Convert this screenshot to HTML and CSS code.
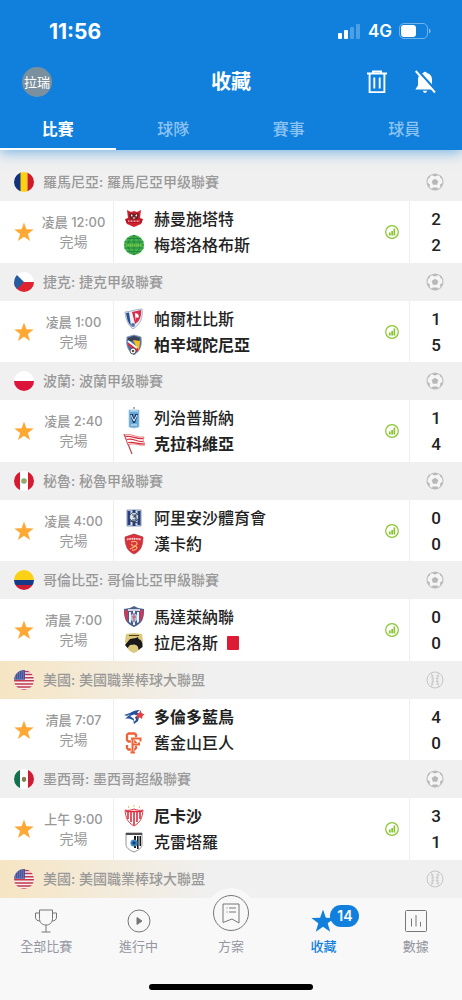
FILE: index.html
```
<!DOCTYPE html>
<html lang="zh-Hant">
<head>
    <meta charset="UTF-8">
    <meta name="viewport" content="width=device-width, initial-scale=1.0">
    <title>收藏</title>
    <link rel="stylesheet" href="styles.css">
</head>
<body>
    <!-- shared icons -->
    <svg class="sprite" aria-hidden="true">
        <symbol id="star" viewBox="0 0 20 20">
            <path d="M10 .4l2.400 6.900 7.300.1-5.800 4.500 2.100 7L10 14.700 4 18.900l2.100-7L.3 7.400l7.300-.1z"/>
        </symbol>
        <symbol id="soccer" viewBox="0 0 18 18">
            <circle cx="9" cy="9" r="8" fill="#f5f5f5" stroke="#c3c3c3" stroke-width="1.200"/>
            <path d="M9 5.700l3.300 2.300-1.200 3.800H6.900L5.700 8z" fill="#b8b8b8"/>
            <path d="M5.300 2L9 3.400 12.700 2 9 .8zM1.200 6.200L3.800 4.500l.4-2.500L2 4zM16.800 6.200l-2.600-1.700-.4-2.500L16 4zM1.100 9.400l2.800 2-.2 3-1.800-2zM16.900 9.400l-2.800 2 .2 3 1.800-2zM6.600 14.500h4.800l.8 1.900L9 17.300l-3.200-.9z" fill="#b8b8b8"/>
        </symbol>
        <symbol id="baseball" viewBox="0 0 18 18">
            <circle cx="9" cy="9" r="8" fill="none" stroke="#c6c6c6" stroke-width="1"/>
            <path d="M5 2.200c2.600 4 2.600 9.600 0 13.600M13 2.200c-2.600 4-2.600 9.600 0 13.600" fill="none" stroke="#c6c6c6" stroke-width="1"/>
            <path d="M4.500 5.500l3.200-.9M5 7.800l3.200-.4M5 10.200l3.200.4M4.500 12.500l3.200.9M13.500 5.500l-3.200-.9M13 7.800l-3.200-.4M13 10.200l-3.200.4M13.500 12.500l-3.200.9" stroke="#c6c6c6" stroke-width=".8"/>
        </symbol>
        <symbol id="stats" viewBox="0 0 14 14">
            <circle cx="7" cy="7" r="6.300" fill="none" stroke="#86c72d" stroke-width="1.200"/>
            <path d="M4 7.600h1.700v2.800H4zM6.300 6H8v4.400H6.300zM8.500 3.500h1.700v6.900H8.500z" fill="#86c72d"/>
        </symbol>
        <symbol id="flag-us" viewBox="0 0 20 20">
            <path d="M0 0h20v20H0z" fill="#f4edf0"/>
            <path d="M0 1.500h20M0 4.600h20M0 7.700h20M0 10.800h20M0 13.900h20M0 17h20M0 20h20" stroke="#c3364b" stroke-width="1.500"/>
            <path d="M0 0h11v9.800H0z" fill="#46529b"/>
            <path d="M1 2h10M1 4h10M1 6h10M1 8h10" stroke="#b9bfe0" stroke-width=".7" stroke-dasharray=".8 1.200"/>
        </symbol>
    </svg>

    <header class="top">
        <div class="status-bar">
            <span class="clock">11:56</span>
            <span class="status-icons">
                <svg width="23" height="15" viewBox="0 0 23 15" fill="#fff">
                    <rect x="0" y="9" width="4" height="6" rx="1"/>
                    <rect x="6" y="6" width="4" height="9" rx="1"/>
                    <rect x="12" y="3" width="4" height="12" rx="1" opacity=".25"/>
                    <rect x="18" y="0" width="4" height="15" rx="1" opacity=".25"/>
                </svg>
                <span class="network">4G</span>
                <svg width="32" height="16" viewBox="0 0 32 16">
                    <rect x=".5" y=".5" width="28" height="15" rx="4.500" fill="none" stroke="#fff" stroke-opacity=".4"/>
                    <rect x="2" y="2" width="15" height="12" rx="3" fill="#fff"/>
                    <path d="M30 5.500c2 .8 2 4.200 0 5z" fill="#fff" opacity=".5"/>
                </svg>
            </span>
        </div>
        <div class="title-bar">
            <button class="avatar">拉瑞</button>
            <h1>收藏</h1>
            <div class="actions">
                <button aria-label="刪除">
                    <svg width="22" height="24" viewBox="0 0 22 24" fill="none" stroke="#fff" stroke-width="1.900">
                        <path d="M1 3.500h20M7 3.200V1.400h8v1.800M3.600 3.500v18.600h14.800V3.500M8.300 7.500v11M13.700 7.500v11"/>
                    </svg>
                </button>
                <button aria-label="關閉通知">
                    <svg width="22" height="24" viewBox="0 0 22 24">
                        <path d="M4 9.500c0-3.300 2-5.800 5.200-6.400a1.900 1.900 0 0 1 3.600 0c3.200.6 5.200 3.100 5.200 6.400v5.700l2.600 4.300H1.400L4 15.200zM9 20.700h4c0 2.800-4 2.800-4 0z" fill="#fff"/>
                        <path d="M3.500.2L23 21.700" stroke="#1180dc" stroke-width="2.400"/>
                        <path d="M1.700 1L21 22.500" stroke="#fff" stroke-width="1.900"/>
                    </svg>
                </button>
            </div>
        </div>
        <nav class="tabs">
            <a href="#" class="active">比賽</a>
            <a href="#">球隊</a>
            <a href="#">賽事</a>
            <a href="#">球員</a>
        </nav>
    </header>

    <main class="matches">
        <section class="group">
            <h2 class="league">
                <svg class="flag" viewBox="0 0 20 20"><path d="M0 0h7v20H0z" fill="#12327c"/><path d="M6.500 0h7v20h-7z" fill="#fcd20e"/><path d="M13.500 0H20v20h-6.500z" fill="#ce1b2c"/></svg>
                <span>羅馬尼亞: 羅馬尼亞甲级聯賽</span>
                <svg class="sport"><use href="#soccer"/></svg>
            </h2>
            <div class="match">
                <button class="fav" aria-label="收藏"><svg><use href="#star"/></svg></button>
                <div class="time"><span class="hour">凌晨 12:00</span><span>完場</span></div>
                <div class="teams">
                    <div class="team">
                        <svg class="crest" viewBox="0 0 22 22"><path d="M4 2l4 2 3-1 3 1 4-2-1 8 3 1-2 5-7 3-7-3-2-5 3-1z" fill="#d0202e"/><path d="M6 6l2-1 3 1 3-1 2 1-1 5-4 1-4-1z" fill="#6d2027"/><path d="M8 6l2 2-2 .5zM14 6l-2 2 2 .5zM9.500 9.500h3L11 11z" fill="#fff"/><path d="M2.500 11.500h17l-1 3.500h-15z" fill="#b61424"/><path d="M5 13.200h12" stroke="#f3c9cb" stroke-width="1.200" stroke-dasharray="1 .5"/></svg>
                        <span>赫曼施塔特</span>
                    </div>
                    <div class="team">
                        <svg class="crest" viewBox="0 0 22 22"><circle cx="11" cy="11" r="10" fill="#3fb64c"/><path d="M1 8h20M1 14h20M4 4.500h14M4 17.500h14M11 1v20M11 1C3 7 3 15 11 21M11 1c8 6 8 14 0 20M1 11h20" fill="none" stroke="#23743b" stroke-width=".7"/><path d="M3 11.200h16" stroke="#7fcb45" stroke-width="2" stroke-dasharray="1.500 .5"/></svg>
                        <span>梅塔洛格布斯</span>
                    </div>
                </div>
                <button class="stats" aria-label="數據"><svg><use href="#stats"/></svg></button>
                <div class="score"><span>2</span><span>2</span></div>
            </div>
        </section>

        <section class="group">
            <h2 class="league">
                <svg class="flag" viewBox="0 0 20 20"><path d="M0 0h20v10H0z" fill="#fff"/><path d="M0 10h20v10H0z" fill="#df2430"/><path d="M0 0l10 10L0 20z" fill="#245d9f"/></svg>
                <span>捷克: 捷克甲级聯賽</span>
                <svg class="sport"><use href="#soccer"/></svg>
            </h2>
            <div class="match">
                <button class="fav" aria-label="收藏"><svg><use href="#star"/></svg></button>
                <div class="time"><span class="hour">凌晨 1:00</span><span>完場</span></div>
                <div class="teams">
                    <div class="team">
                        <svg class="crest" viewBox="0 0 22 22"><path d="M2 4c5 0 11-3 17-3 1 8-1 15-9 20C5 17 3 12 2 4z" fill="#eef1f7" stroke="#8190b6" stroke-width=".7"/><path d="M3 5l3-.5L8 18C5 15 4 11 3 5z" fill="#284f96"/><path d="M9 4l9-2c.5 6-1 11-6 14z" fill="#d92d4b"/><path d="M12 5l3 1 1 3-2 1-1-1v4l-1-6z" fill="#fff"/><circle cx="10" cy="17" r="2" fill="#5b74a8"/></svg>
                        <span>帕爾杜比斯</span>
                    </div>
                    <div class="team winner">
                        <svg class="crest" viewBox="0 0 22 22"><path d="M4 3l7-2 7 2c1 8 0 13-7 18C4 16 3 11 4 3z" fill="#4a6db0" stroke="#8c94a8" stroke-width=".8"/><path d="M5 4l6-2 6 2-1 3H5z" fill="#3a4258"/><path d="M5 9l12 5-3 4-9-7z" fill="#e42b39"/><path d="M10 6l7 1-1 9-3-4z" fill="#f5c21b"/><path d="M5 7l9 7" stroke="#fff" stroke-width="1.800"/><circle cx="10" cy="17" r="3" fill="#eee" stroke="#333" stroke-width=".7"/><circle cx="10" cy="17" r="1" fill="#222"/></svg>
                        <span>柏辛域陀尼亞</span>
                    </div>
                </div>
                <button class="stats" aria-label="數據"><svg><use href="#stats"/></svg></button>
                <div class="score"><span>1</span><span>5</span></div>
            </div>
        </section>

        <section class="group">
            <h2 class="league">
                <svg class="flag" viewBox="0 0 20 20"><path d="M0 0h20v10H0z" fill="#fff"/><path d="M0 10h20v10H0z" fill="#dc143c"/></svg>
                <span>波蘭: 波蘭甲级聯賽</span>
                <svg class="sport"><use href="#soccer"/></svg>
            </h2>
            <div class="match">
                <button class="fav" aria-label="收藏"><svg><use href="#star"/></svg></button>
                <div class="time"><span class="hour">凌晨 2:40</span><span>完場</span></div>
                <div class="teams">
                    <div class="team">
                        <svg class="crest" viewBox="0 0 22 22"><circle cx="11" cy="1" r=".9" fill="#7b8d9f"/><path d="M6 3h10v17l-5 1-5-1z" fill="#68a9d6" stroke="#a3c8e0" stroke-width=".8"/><path d="M7 7h3l1 4 1-4h3l-3 9h-2z" fill="#173d72"/><path d="M8 8l3 6 3-6" fill="none" stroke="#fff" stroke-width="1"/><path d="M7 4h8M8 18h6" stroke="#dceef9"/></svg>
                        <span>列治普斯納</span>
                    </div>
                    <div class="team winner">
                        <svg class="crest" viewBox="0 0 22 22"><path d="M1 1l8 20" stroke="#b94851" stroke-width="1.200"/><path d="M2 2c6-2 11 3 19 2l-1 3 2 5c-7 1-11-3-17 0z" fill="#fff" stroke="#d94751" stroke-width=".7"/><path d="M3 3.500c6-1 10 3 17 2M4 6.500c6-2 10 3 16 2M5 9.800c6-2 10 2 16 1" fill="none" stroke="#d8323e" stroke-width="1.200"/></svg>
                        <span>克拉科維亞</span>
                    </div>
                </div>
                <button class="stats" aria-label="數據"><svg><use href="#stats"/></svg></button>
                <div class="score"><span>1</span><span>4</span></div>
            </div>
        </section>

        <section class="group">
            <h2 class="league">
                <svg class="flag" viewBox="0 0 20 20"><path d="M0 0h20v20H0z" fill="#fff"/><path d="M0 0h6v20H0zM14 0h6v20h-6z" fill="#d51a31"/><circle cx="10" cy="10" r="2.800" fill="#76b36d"/><path d="M9 10h3" stroke="#d99058" stroke-width="1.500"/></svg>
                <span>秘魯: 秘魯甲級聯賽</span>
                <svg class="sport"><use href="#soccer"/></svg>
            </h2>
            <div class="match">
                <button class="fav" aria-label="收藏"><svg><use href="#star"/></svg></button>
                <div class="time"><span class="hour">凌晨 4:00</span><span>完場</span></div>
                <div class="teams">
                    <div class="team">
                        <svg class="crest" viewBox="0 0 22 22"><path d="M4 3h14v16H4z" fill="#dce2ef" stroke="#6679a8" stroke-width=".8"/><path d="M4.500 4h3v14h-3zM14.500 4h3v14h-3zM9.500 3h3v16h-3z" fill="#263f7c"/><circle cx="11" cy="10" r="4.500" fill="#e4e7ee" stroke="#35486f"/><path d="M9 8h4l-2 2h2v3H9M7 14l8 2" fill="none" stroke="#36425a" stroke-width="1.200"/></svg>
                        <span>阿里安沙體育會</span>
                    </div>
                    <div class="team">
                        <svg class="crest" viewBox="0 0 22 22"><path d="M2 4l9-3 9 3c0 8-2 14-9 17C4 18 2 12 2 4z" fill="#d8313d" stroke="#a83a42" stroke-width=".7"/><path d="M4 6.500c4-1 10-1 14 0" fill="none" stroke="#ffdcdc" stroke-width="1.800" stroke-dasharray="1.200 .5"/><path d="M8 9c7-2 8 3 3 4 5 0 3 5-2 4M8 11l3 3-4 2" fill="none" stroke="#f1b76b" stroke-width="1.200"/></svg>
                        <span>漢卡約</span>
                    </div>
                </div>
                <button class="stats" aria-label="數據"><svg><use href="#stats"/></svg></button>
                <div class="score"><span>0</span><span>0</span></div>
            </div>
        </section>

        <section class="group">
            <h2 class="league">
                <svg class="flag" viewBox="0 0 20 20"><path d="M0 0h20v10H0z" fill="#fbd116"/><path d="M0 10h20v5H0z" fill="#173a86"/><path d="M0 15h20v5H0z" fill="#ce1b31"/></svg>
                <span>哥倫比亞: 哥倫比亞甲級聯賽</span>
                <svg class="sport"><use href="#soccer"/></svg>
            </h2>
            <div class="match">
                <button class="fav" aria-label="收藏"><svg><use href="#star"/></svg></button>
                <div class="time"><span class="hour">清晨 7:00</span><span>完場</span></div>
                <div class="teams">
                    <div class="team">
                        <svg class="crest" viewBox="0 0 22 22"><path d="M1 3l6-1 4-2 4 2 6 1c0 9-1 14-10 18C2 17 1 12 1 3z" fill="#4a5f8d"/><path d="M1.500 4H5v12c-3-3-4-7-3.500-12zM17 4h3.500c.5 5-.5 9-3.500 12z" fill="#c73a5c"/><path d="M6 6h2v11l-2-1zM14 6h2v10l-2 1zM10 5h2v14h-2z" fill="#eef2fa"/><path d="M5 4h12" stroke="#fff" stroke-width="1.500"/><path d="M8 9l3-2 3 2v5l-3 3-3-3z" fill="#a5cae6"/><path d="M11 7v9M9 11h4" stroke="#d84359"/></svg>
                        <span>馬達萊納聯</span>
                    </div>
                    <div class="team">
                        <svg class="crest" viewBox="0 0 22 22"><path d="M3 2l8-1 8 1 1 7c-1 6-4 10-9 12C5 19 3 15 2 9z" fill="#dcc87e"/><path d="M6 3.500h10" stroke="#493f23" stroke-width="1"/><path d="M2 13l5-6 6-1 2-1 .5 2c3 1 4.500 4 4 8l-4 3c0-3-1-5-4-5.500L7 13l-2.500 3z" fill="#19191b"/></svg>
                        <span>拉尼洛斯</span>
                        <i class="red-card"></i>
                    </div>
                </div>
                <button class="stats" aria-label="數據"><svg><use href="#stats"/></svg></button>
                <div class="score"><span>0</span><span>0</span></div>
            </div>
        </section>

        <section class="group">
            <h2 class="league featured">
                <svg class="flag"><use href="#flag-us"/></svg>
                <span>美國: 美國職業棒球大聯盟</span>
                <svg class="sport"><use href="#baseball"/></svg>
            </h2>
            <div class="match">
                <button class="fav" aria-label="收藏"><svg><use href="#star"/></svg></button>
                <div class="time"><span class="hour">清晨 7:07</span><span>完場</span></div>
                <div class="teams">
                    <div class="team winner">
                        <svg class="crest" viewBox="0 0 22 22"><path d="M1 9l6-2c3-2 6-3 10-3l-3 2.500 3 1.500-2 7-4 3-1-4-4-1.500H2l3-2z" fill="#25509b"/><path d="M7 10l4-1.500 3.500 1L12 11l1 3-2.500 2 .5-3z" fill="#fff"/><path d="M2 9.500l5-1-1 1.500z" fill="#a4b9d9"/><path d="M14 8l2-.5L17.500 4l1 3 3 1.500-2 1.500-.5 3-2-1.500-3 1z" fill="#e23e43"/></svg>
                        <span>多倫多藍鳥</span>
                    </div>
                    <div class="team">
                        <svg class="crest" viewBox="0 0 22 22" fill="none"><path d="M13 6V2.500L11.500 1.500h-6L4 3v5l1.500 1.500h6L13 11v5l-1.500 1.500h-6L4 16v-3" stroke="#ee6337" stroke-width="2.300"/><path d="M9.500 21V6.500M8 6.500h10.500M11 12.500h5" stroke="#fff" stroke-width="3.200"/><path d="M9.500 20.500V6.500M7.500 20.500h4.500M8 6.500h9.500v3M10 12.500h6v-2" stroke="#ee6337" stroke-width="2"/></svg>
                        <span>舊金山巨人</span>
                    </div>
                </div>
                <div class="score"><span>4</span><span>0</span></div>
            </div>
        </section>

        <section class="group">
            <h2 class="league">
                <svg class="flag" viewBox="0 0 20 20"><path d="M0 0h20v20H0z" fill="#fff"/><path d="M0 0h6v20H0z" fill="#12704e"/><path d="M14 0h6v20h-6z" fill="#ce1c34"/><circle cx="10" cy="10" r="2.200" fill="#91764f"/><path d="M8 11c1 2 3 2 4 0" fill="none" stroke="#59834d"/></svg>
                <span>墨西哥: 墨西哥超級聯賽</span>
                <svg class="sport"><use href="#soccer"/></svg>
            </h2>
            <div class="match">
                <button class="fav" aria-label="收藏"><svg><use href="#star"/></svg></button>
                <div class="time"><span class="hour">上午 9:00</span><span>完場</span></div>
                <div class="teams">
                    <div class="team winner">
                        <svg class="crest" viewBox="0 0 22 22"><path d="M5 2h1M10.500 1h1M16 2h1" stroke="#d9b84d" stroke-width="1.500"/><path d="M2 5c3 1 6 0 9-1 3 1 6 2 9 1-1 8-2 12-9 16C4 17 3 13 2 5z" fill="#fff" stroke="#d93645" stroke-width="1"/><path d="M3 6.500h16M5 7v7M8 7v10M11 7v13M14 7v10M17 7v7" fill="none" stroke="#df2e40" stroke-width="1.600"/></svg>
                        <span>尼卡沙</span>
                    </div>
                    <div class="team">
                        <svg class="crest" viewBox="0 0 22 22"><path d="M3 2h16v11c0 4-3 6-8 8-5-2-8-4-8-8z" fill="#fff" stroke="#777" stroke-width=".8"/><path d="M3 2h16v2H3z" fill="#4b4b52"/><path d="M11 5h2v12h-2zM14 5h1.600v13H14zM16.500 5H18v10h-1.500z" fill="#17191f"/><circle cx="11" cy="12" r="3.600" fill="#3b87c5"/><path d="M9 12l2-2 2 2-2 2z" fill="#143d70"/></svg>
                        <span>克雷塔羅</span>
                    </div>
                </div>
                <button class="stats" aria-label="數據"><svg><use href="#stats"/></svg></button>
                <div class="score"><span>3</span><span>1</span></div>
            </div>
        </section>

        <section class="group">
            <h2 class="league featured">
                <svg class="flag"><use href="#flag-us"/></svg>
                <span>美國: 美國職業棒球大聯盟</span>
                <svg class="sport"><use href="#baseball"/></svg>
            </h2>
        </section>
    </main>

    <footer class="bottom">
        <nav class="bottom-nav">
            <a href="#">
                <svg width="24" height="24" viewBox="0 0 24 24"><path d="M5.500 1h13v8.500c0 4-2.500 6.500-6.500 6.500s-6.500-2.500-6.500-6.500zM5.500 4h-4v4c0 2.500 1.500 4 4.500 4M18.500 4h4v4c0 2.500-1.500 4-4.500 4M12 16v7M7.500 23h9"/></svg>
                <span>全部比賽</span>
            </a>
            <a href="#">
                <svg width="24" height="24" viewBox="0 0 24 24"><circle cx="12" cy="12" r="11"/><path d="M10 8.500l5 3.500-5 3.500z" fill="#777"/></svg>
                <span>進行中</span>
            </a>
            <a href="#" class="plan">
                <svg width="38" height="38" viewBox="0 0 38 38"><circle cx="19" cy="19" r="17.500"/><path d="M11 10h16v19l-7-4-9 3.500zM14.500 14h1M17 14h7M14.500 18h1M17 18h7"/></svg>
                <span>方案</span>
            </a>
            <a href="#" class="active">
                <svg width="24" height="24" viewBox="0 0 20 20"><use href="#star"/></svg>
                <b class="badge">14</b>
                <span>收藏</span>
            </a>
            <a href="#">
                <svg width="24" height="24" viewBox="0 0 24 24"><rect x="1.500" y="1.500" width="21" height="21" rx="1"/><path d="M7.500 9.500v8M12 6v11.500M16.500 13v4.500"/></svg>
                <span>數據</span>
            </a>
        </nav>
        <div class="home-bar"></div>
    </footer>
</body>
</html>
```
FILE: styles.css
```
* {
    box-sizing: border-box;
}
body {
    font-family: Inter, "Noto Sans CJK TC", sans-serif;
    background-color: #f0f0f0;
    color: #222;
    margin: 0;
    height: 100vh;
    display: flex;
    flex-direction: column;
    overflow: hidden;
}
button {
    border: none;
    background: none;
    padding: 0;
    font-family: inherit;
    color: inherit;
    cursor: pointer;
}
a {
    color: inherit;
    text-decoration: none;
}
svg {
    display: block;
    flex-shrink: 0;
}
.sprite {
    position: absolute;
    width: 0;
    height: 0;
}

/* header */
.top {
    background-color: #1180dc;
    color: #fff;
    position: relative;
    z-index: 2;
    box-shadow: 0 3px 12px rgba(17, 128, 220, 0.5);
}
.status-bar {
    display: flex;
    justify-content: space-between;
    align-items: center;
    height: 60px;
    padding: 2px 31px 0 49px;
}
.clock {
    font-size: 21px;
    font-weight: 700;
}
.status-icons {
    display: flex;
    align-items: center;
    gap: 7px;
}
.network {
    font-size: 17px;
    font-weight: 600;
}
.title-bar {
    display: grid;
    grid-template-columns: 1fr auto 1fr;
    align-items: center;
    height: 44px;
    padding: 0 22px;
}
.avatar {
    width: 30px;
    height: 30px;
    border-radius: 50%;
    background-color: #7a909f;
    color: #fff;
    font-size: 13px;
    line-height: 30px;
}
h1 {
    margin: 0;
    font-size: 20px;
    line-height: 30px;
}
.actions {
    display: flex;
    justify-content: flex-end;
    gap: 26px;
    padding-right: 4px;
}
.tabs {
    display: flex;
    height: 46px;
}
.tabs a {
    flex: 1;
    text-align: center;
    font-size: 16px;
    font-weight: 500;
    line-height: 50px;
    color: #8cc3f1;
}
.tabs .active {
    color: #fff;
    font-weight: 700;
    border-bottom: 2px solid #fff;
}

/* match list */
.matches {
    flex: 1;
    min-height: 0;
    overflow: hidden;
    padding-top: 13px;
}
.league {
    display: flex;
    align-items: center;
    gap: 9px;
    height: 38px;
    margin: 0;
    padding: 0 18px 0 14px;
    background-color: #f0f0f0;
    color: #999;
    font-size: 14px;
    font-weight: 500;
}
.league span {
    flex: 1;
    padding-bottom: 2px;
}
.featured {
    background-image: linear-gradient(90deg, #f6e5c3, #f0f0f0 45%);
}
.flag {
    width: 20px;
    height: 20px;
    border-radius: 50%;
}
.sport {
    width: 18px;
    height: 18px;
}
.match {
    display: flex;
    align-items: center;
    height: 61px;
    background-color: #fff;
}
.group:nth-child(odd) .match {
    height: 62px;
}
.fav {
    margin-left: 14px;
    width: 20px;
}
.fav svg {
    width: 20px;
    height: 20px;
    fill: #ffa834;
}
.time {
    width: 79px;
    text-align: center;
    font-size: 14px;
    line-height: 19px;
    color: #999;
}
.time span {
    display: block;
    white-space: nowrap;
}
.time .hour {
    font-size: 13px;
    font-weight: 500;
}
.teams {
    flex: 1;
    align-self: stretch;
    display: flex;
    flex-direction: column;
    justify-content: center;
    border-left: 1px solid #eee;
    padding-left: 9px;
}
.team {
    display: flex;
    align-items: center;
    gap: 9px;
    height: 26px;
    font-size: 16px;
    font-weight: 500;
}
.team span {
    padding-bottom: 2px;
}
.winner {
    font-weight: 700;
}
.crest {
    width: 22px;
    height: 22px;
}
.red-card {
    width: 12px;
    height: 14px;
    border-radius: 1px;
    background-color: #dc1c34;
}
.stats {
    margin-right: 10px;
}
.stats svg {
    width: 14px;
    height: 14px;
}
.score {
    align-self: stretch;
    display: flex;
    flex-direction: column;
    justify-content: center;
    width: 53px;
    border-left: 1px solid #eee;
    text-align: center;
    font-family: Roboto, sans-serif;
    font-size: 17px;
    font-weight: 500;
    line-height: 26px;
}

/* bottom navigation */
.bottom {
    position: relative;
    background-color: #f8f8f9;
    height: 102px;
}
.bottom-nav {
    display: flex;
    height: 58px;
}
.bottom-nav a {
    flex: 1;
    display: flex;
    flex-direction: column;
    align-items: center;
    justify-content: flex-end;
    gap: 3px;
    position: relative;
    color: #9496a0;
    font-size: 13px;
    line-height: 20px;
}
.bottom-nav svg {
    fill: none;
    stroke: #777;
    stroke-width: 1;
}
.bottom-nav .plan svg {
    box-sizing: content-box;
    padding: 6px;
    margin-bottom: -5px;
    border-radius: 50%;
    background-color: #f8f8f9;
}
.bottom-nav .active {
    color: #1180dc;
    font-weight: 500;
}
.bottom-nav .active svg {
    fill: #1180dc;
    stroke: none;
}
.badge {
    position: absolute;
    top: 7px;
    left: calc(50% + 7px);
    width: 29px;
    border-radius: 11px;
    background-color: #1180dc;
    color: #fff;
    font-size: 14px;
    font-weight: 600;
    line-height: 22px;
    text-align: center;
}
.home-bar {
    width: 164px;
    height: 6px;
    margin: 28px auto 0;
    border-radius: 3px;
    background-color: #000;
}
```
